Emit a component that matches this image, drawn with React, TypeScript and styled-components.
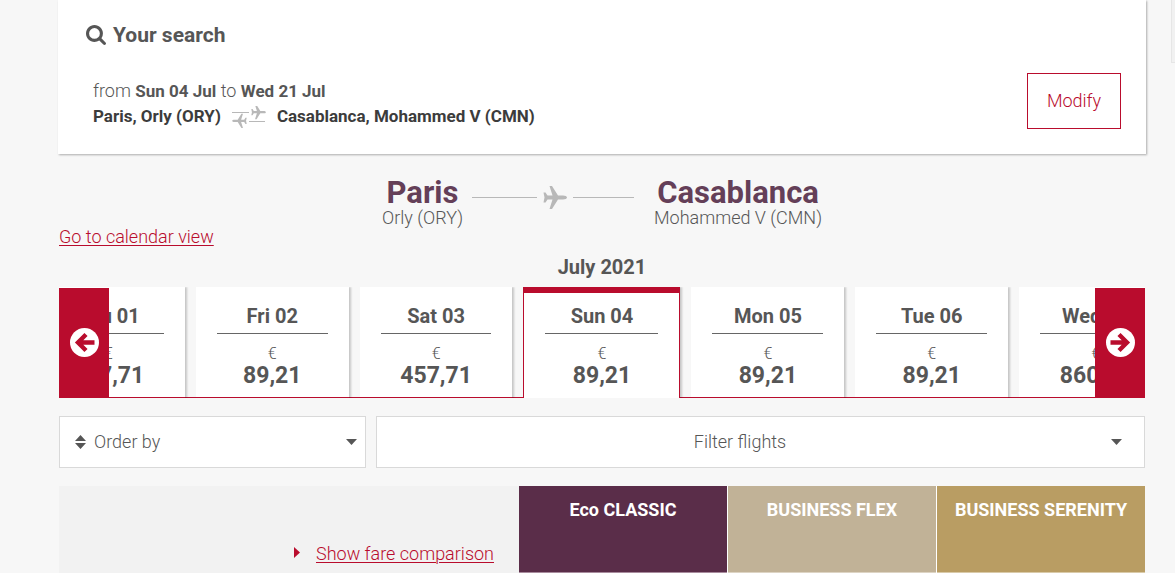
import React from "react";
import styled, { createGlobalStyle } from "styled-components";

const red = "#b90c2d";
const gray = "#565656";

const Global = createGlobalStyle`
  * { box-sizing: border-box; }
  body { margin: 0; background: #f7f7f7; color: ${gray}; font-family: Roboto, "Liberation Sans", sans-serif; font-size: 18px; line-height: 24px; font-weight: 300; }
  h1, h2, h3, p { margin: 0; }
  button, select { font: inherit; color: inherit; border-radius: 0; cursor: pointer; }
`;

const Shell = styled.div`
  display: flex;
  align-items: flex-start;
`;
const Page = styled.div`
  flex: 1;
  min-width: 0;
  padding: 0 25px 0 58px;
`;
const ScrollTrack = styled.div`
  width: 4px;
  height: 63px;
  background: #f1f1f1;
  border-left: 1px solid #e6e6e6;
  border-bottom: 1px solid #e6e6e6;
`;
const SearchCard = styled.section`
  background: #fff;
  padding: 23px 25px 25px 28px;
  box-shadow: 1px 1px 2px rgba(0, 0, 0, 0.3);
`;
const SearchTitle = styled.h2`
  display: flex;
  align-items: center;
  gap: 7px;
  font-size: 21px;
  line-height: 24px;
  font-weight: 700;
`;
const SearchBody = styled.div`
  display: flex;
  justify-content: space-between;
  align-items: flex-start;
  padding: 26px 0 0 7px;
`;
const Trip = styled.div`
  padding-top: 5px;
  line-height: 25px;
`;
const TripDate = styled.b`
  font-size: 17px;
  font-weight: 700;
`;
const Airports = styled.p`
  display: flex;
  align-items: center;
  gap: 11px;
  color: #3c3c3c;
  font-size: 17px;
  font-weight: 700;
`;
const ModifyButton = styled.button`
  width: 94px;
  height: 56px;
  padding: 0;
  background: #fff;
  border: 1px solid ${red};
  color: ${red};
`;
const Content = styled.main`
  padding: 0 1px;
`;
const Route = styled.div`
  display: flex;
  justify-content: center;
  padding-top: 23px;
`;
const City = styled.div`
  text-align: center;
`;
const CityName = styled.h1`
  font-size: 31px;
  line-height: 32px;
  font-weight: 700;
  color: #643f58;
`;
const AirportName = styled.p`
  line-height: 18px;
`;
const RouteLine = styled.div`
  display: flex;
  align-items: center;
  gap: 6px;
  width: 162px;
  height: 41px;
  margin: 0 20px 0 9px;
`;
const Line = styled.span<{ $grow: number }>`
  flex: ${(p) => p.$grow} 1 0;
  height: 1px;
  background: #b8b8b8;
`;
const ViewSwitch = styled.p`
  line-height: 20px;
`;
const Link = styled.a`
  color: ${red};
  text-decoration: underline;
  text-underline-offset: 2px;
  text-decoration-thickness: 1px;
`;
const Month = styled.h3`
  padding: 8px 0;
  font-size: 20px;
  line-height: 24px;
  text-align: center;
`;
const Carousel = styled.div`
  position: relative;
  overflow: hidden;
`;
const Days = styled.div`
  display: grid;
  grid-template-columns: repeat(3, 1fr) 157px repeat(3, 1fr);
  gap: 11px;
  margin: 0 -27px;
  background: linear-gradient(${red}, ${red}) bottom / 100% 1px no-repeat;
`;
const Day = styled.button<{ $active?: boolean }>`
  display: flex;
  flex-direction: column;
  justify-content: flex-start;
  align-items: stretch;
  height: 111px;
  padding: ${(p) => (p.$active ? "11px 21px 0" : "17px 21px 0")};
  background: #fff;
  border: 0 solid ${red};
  border-width: ${(p) => (p.$active ? "6px 1px 0" : "0 0 1px")};
  box-shadow: 2px 0 2px rgba(0, 0, 0, 0.2);
  text-align: center;
`;
const DayName = styled.span`
  padding-bottom: 5px;
  border-bottom: 1px solid #666;
  font-size: 20px;
  line-height: 24px;
  font-weight: 700;
`;
const Currency = styled.span`
  padding-top: 10px;
  font-size: 16px;
  line-height: 20px;
`;
const Price = styled.span`
  font-size: 23px;
  line-height: 24px;
  font-weight: 700;
`;
const Arrow = styled.button<{ $side: "left" | "right" }>`
  position: absolute;
  top: 1px;
  bottom: 1px;
  ${(p) => p.$side}: 0;
  display: flex;
  align-items: center;
  justify-content: center;
  width: 50px;
  padding: 0;
  border: 0;
  background: ${red};
`;
const Controls = styled.div`
  display: grid;
  grid-template-columns: 307px 1fr;
  gap: 10px;
  padding: 18px 0;
`;
const OrderBox = styled.label`
  display: flex;
  align-items: center;
  gap: 8px;
  height: 52px;
  padding: 0 8px 0 15px;
  background: #fff;
  border: 1px solid #d9d9d9;
`;
const OrderSelect = styled.select`
  flex: 1;
  appearance: none;
  padding: 0;
  border: 0;
  background: transparent;
`;
const FilterButton = styled.button`
  display: flex;
  align-items: center;
  height: 52px;
  padding: 0 22px;
  background: #fff;
  border: 1px solid #d9d9d9;
`;
const FilterText = styled.span`
  flex: 1;
  padding-right: 30px;
`;
const Fares = styled.div`
  display: grid;
  grid-template-columns: 1fr repeat(3, 208px);
  column-gap: 1px;
  background: linear-gradient(#fff, #fff) right / 626px 100% no-repeat;
`;
const Compare = styled.div`
  display: flex;
  align-items: flex-end;
  justify-content: flex-end;
  gap: 16px;
  padding: 0 25px 7px 0;
  margin-right: -1px;
  background: #f2f2f2;
`;
const Fare = styled.div<{ $color: string; $edge: string }>`
  height: 87px;
  padding-top: 12px;
  border-bottom: 1px solid ${(p) => p.$edge};
  background: ${(p) => p.$color};
  color: #fff;
  font-weight: 700;
  text-align: center;
`;

const planePath =
  "M24 11.5c0 1.2-1.8 2-4 2h-5L9 23H6.500l3-9.500H4.500L2.500 16.500H.5L1.500 11.500.5 6.500h2L4.500 9.500h5L6.500 0H9l6 9.500h5c2.200 0 4 .8 4 2z";

const Plane = () => (
  <svg width="24" height="23" viewBox="0 0 24 23" aria-hidden="true">
    <path d={planePath} fill="#b8b8b8" />
  </svg>
);

const RoundTrip = () => (
  <svg width="34" height="22" viewBox="0 0 34 22" aria-hidden="true">
    <path d="M0 6.500h17M17 15.500h16" stroke="#b8b8b8" />
    <g fill="#b8b8b8">
      <path d={planePath} transform="translate(19 -1) scale(.62)" />
      <path d={planePath} transform="translate(15 22) rotate(180) scale(.62)" />
    </g>
  </svg>
);

const SearchIcon = () => (
  <svg width="20" height="20" viewBox="0 0 1664 1664" aria-hidden="true">
    <path
      fill={gray}
      d="M1152 704q0-185-131.500-316.500t-316.500-131.500-316.500 131.500-131.500 316.500 131.500 316.500 316.500 131.500 316.500-131.500 131.500-316.500zm512 832q0 52-38 90t-90 38q-54 0-90-38l-343-342q-179 124-399 124-143 0-273.500-55.500t-225-150-150-225-55.500-273.500 55.500-273.500 150-225 225-150 273.500-55.500 273.500 55.500 225 150 150 225 55.500 273.500q0 220-124 399l343 343q37 37 37 90z"
    />
  </svg>
);

const CircleArrow = ({ flip }: { flip?: boolean }) => (
  <svg width="29" height="29" viewBox="0 0 29 29" aria-hidden="true">
    <circle cx="14.500" cy="14.500" r="14.500" fill="#fff" />
    <g transform={flip ? "translate(29 0) scale(-1 1)" : undefined}>
      <path d="M24.500 14.500H9M16 6.500l-8 8 8 8" fill="none" stroke={red} strokeWidth="4.400" />
    </g>
  </svg>
);

const Caret = () => (
  <svg width="11" height="6" viewBox="0 0 11 6" aria-hidden="true">
    <path d="M0 0h11L5.500 6z" fill={gray} />
  </svg>
);

const days = [
  { name: "Thu 01", price: "457,71" },
  { name: "Fri 02", price: "89,21" },
  { name: "Sat 03", price: "457,71" },
  { name: "Sun 04", price: "89,21", active: true },
  { name: "Mon 05", price: "89,21" },
  { name: "Tue 06", price: "89,21" },
  { name: "Wed 07", price: "860,71" },
];

const fares = [
  { name: "Eco CLASSIC", color: "#5a2d49", edge: "#a88b9d" },
  { name: "BUSINESS FLEX", color: "#c1b297", edge: "#ddd4c4" },
  { name: "BUSINESS SERENITY", color: "#b99d63", edge: "#d9caa9" },
];

export default function App() {
  return (
    <Shell>
      <Global />
      <Page>
        <SearchCard>
          <SearchTitle>
            <SearchIcon />
            Your search
          </SearchTitle>
          <SearchBody>
            <Trip>
              <p>
                from <TripDate>Sun 04 Jul</TripDate> to <TripDate>Wed 21 Jul</TripDate>
              </p>
              <Airports>
                <span>Paris, Orly (ORY)</span>
                <RoundTrip />
                <span>Casablanca, Mohammed V (CMN)</span>
              </Airports>
            </Trip>
            <ModifyButton type="button">Modify</ModifyButton>
          </SearchBody>
        </SearchCard>
        <Content>
          <Route>
            <City>
              <CityName>Paris</CityName>
              <AirportName>Orly (ORY)</AirportName>
            </City>
            <RouteLine>
              <Line $grow={65} />
              <Plane />
              <Line $grow={61} />
            </RouteLine>
            <City>
              <CityName>Casablanca</CityName>
              <AirportName>Mohammed V (CMN)</AirportName>
            </City>
          </Route>
          <ViewSwitch>
            <Link href="#calendar">Go to calendar view</Link>
          </ViewSwitch>
          <Month>July 2021</Month>
          <Carousel>
            <Days>
              {days.map((d) => (
                <Day key={d.name} type="button" $active={d.active}>
                  <DayName>{d.name}</DayName>
                  <Currency>€</Currency>
                  <Price>{d.price}</Price>
                </Day>
              ))}
            </Days>
            <Arrow type="button" $side="left" aria-label="Previous days">
              <CircleArrow />
            </Arrow>
            <Arrow type="button" $side="right" aria-label="Next days">
              <CircleArrow flip />
            </Arrow>
          </Carousel>
          <Controls>
            <OrderBox>
              <svg width="11" height="14" viewBox="0 0 11 14" aria-hidden="true">
                <path d="M0 6h11L5.500 0zM0 8h11l-5.500 6z" fill={gray} />
              </svg>
              <OrderSelect aria-label="Order by">
                <option>Order by</option>
              </OrderSelect>
              <Caret />
            </OrderBox>
            <FilterButton type="button">
              <FilterText>Filter flights</FilterText>
              <Caret />
            </FilterButton>
          </Controls>
          <Fares>
            <Compare>
              <svg width="6" height="24" viewBox="0 0 6 24" aria-hidden="true">
                <path d="M0 5l6 5.500L0 16z" fill={red} />
              </svg>
              <Link href="#compare">Show fare comparison</Link>
            </Compare>
            {fares.map((f) => (
              <Fare key={f.name} $color={f.color} $edge={f.edge}>
                {f.name}
              </Fare>
            ))}
          </Fares>
        </Content>
      </Page>
      <ScrollTrack />
    </Shell>
  );
}
